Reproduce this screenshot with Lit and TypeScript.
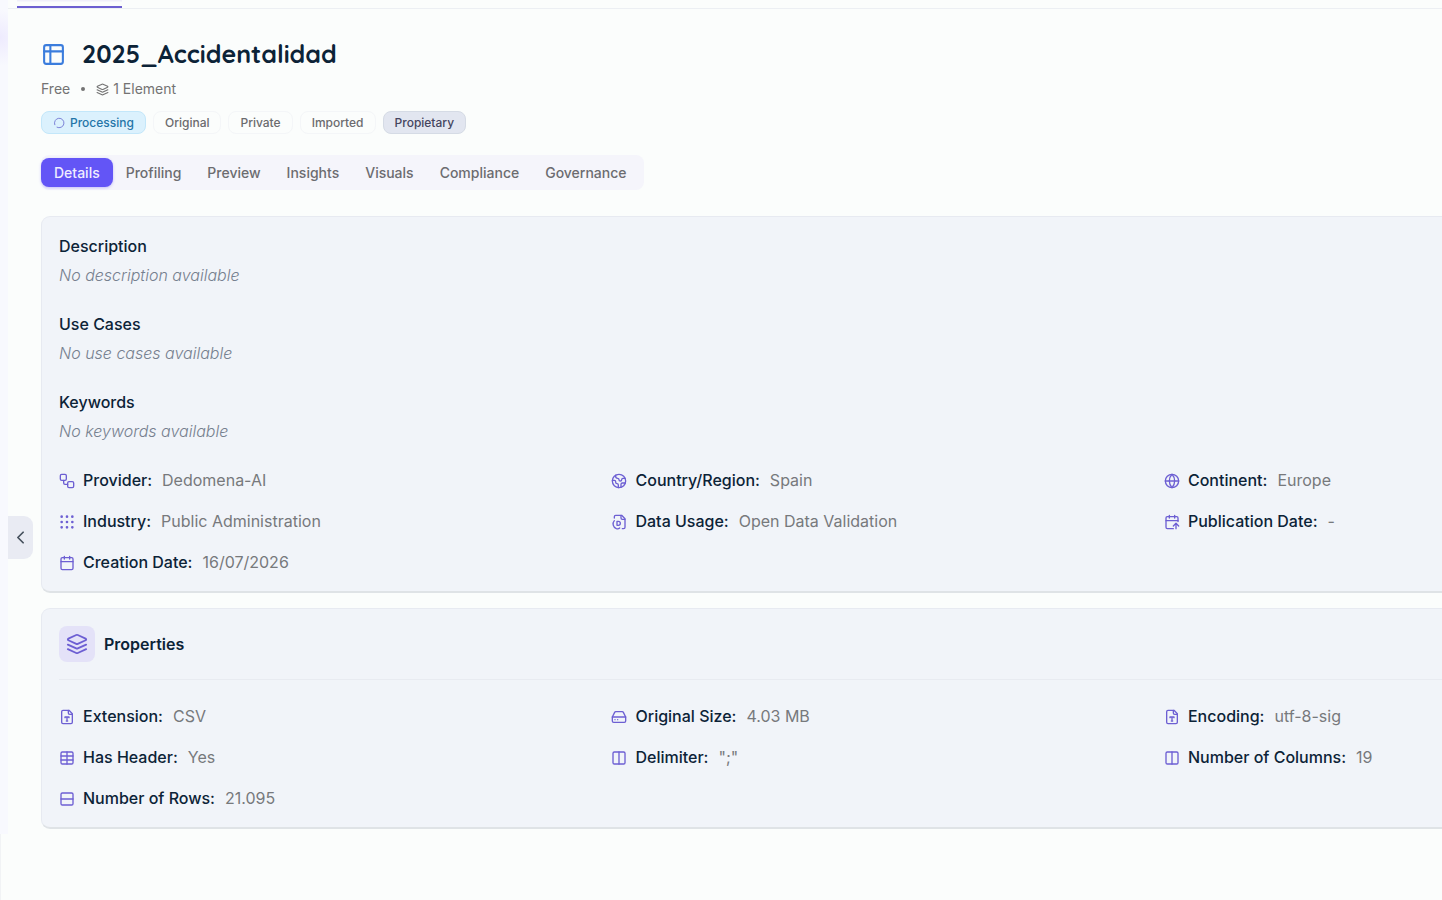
import { LitElement, html, css, svg, TemplateResult } from "lit";
import { customElement, property } from "lit/decorators.js";

const ICONS: Record<string, TemplateResult> = {
  table: svg`<rect x="3" y="3" width="18" height="18" rx="2"/><path d="M3 9h18M9 3v18"/>`,
  layers: svg`<path d="m12.83 2.18a2 2 0 0 0-1.66 0L2.6 6.08a1 1 0 0 0 0 1.83l8.58 3.91a2 2 0 0 0 1.66 0l8.58-3.9a1 1 0 0 0 0-1.83Z"/><path d="m22 17.65-9.17 4.16a2 2 0 0 1-1.66 0L2 17.65"/><path d="m22 12.65-9.17 4.16a2 2 0 0 1-1.66 0L2 12.65"/>`,
  loader: svg`<path d="M8 20.500a9.500 9.500 0 1 0-4.500-5"/>`,
  chevron: svg`<path d="m15 18-6-6 6-6"/>`,
  provider: svg`<rect x="2" y="2" width="9" height="9" rx="2"/><rect x="13" y="13" width="9" height="9" rx="2"/><path d="M7 11v4a2 2 0 0 0 2 2h4"/>`,
  earth: svg`<path d="M21.54 15H17a2 2 0 0 0-2 2v4.54"/><path d="M7 3.34V5a3 3 0 0 0 3 3a2 2 0 0 1 2 2c0 1.1.9 2 2 2a2 2 0 0 0 2-2c0-1.1.9-2 2-2h3.17"/><path d="M11 21.95V18a2 2 0 0 0-2-2a2 2 0 0 1-2-2v-1a2 2 0 0 0-2-2H2.05"/><circle cx="12" cy="12" r="10"/>`,
  globe: svg`<circle cx="12" cy="12" r="10"/><path d="M12 2a14.5 14.5 0 0 0 0 20 14.5 14.5 0 0 0 0-20"/><path d="M2 12h20"/>`,
  grip: svg`${[4, 12, 20].map((y) => [4, 12, 20].map((x) => svg`<circle cx=${x} cy=${y} r="1"/>`))}`,
  usage: svg`<path d="M5 6V4a2 2 0 0 1 2-2h9l5 5v13a2 2 0 0 1-2 2h-2"/><path d="M15 2v4a2 2 0 0 0 2 2h4"/><path d="M5 10a7.500 7.500 0 0 0 3 12c2 .5 4 0 5-1"/><path d="M9 11v6h2a3 3 0 0 0 0-6z"/>`,
  calendarUp: svg`<path d="m14 18 4-4 4 4"/><path d="M16 2v4M18 22v-8M8 2v4M3 10h18"/><path d="M21 11.35V6a2 2 0 0 0-2-2H5a2 2 0 0 0-2 2v14a2 2 0 0 0 2 2h9"/>`,
  calendar: svg`<path d="M8 2v4M16 2v4"/><rect x="3" y="4" width="18" height="18" rx="2"/><path d="M3 10h18"/>`,
  fileType: svg`<path d="M15 2H6a2 2 0 0 0-2 2v16a2 2 0 0 0 2 2h12a2 2 0 0 0 2-2V7Z"/><path d="M14 2v4a2 2 0 0 0 2 2h4"/><path d="M9 13v-1h6v1M12 12v6M11 18h2"/>`,
  drive: svg`<path d="M22 12H2"/><path d="M5.45 5.11 2 12v6a2 2 0 0 0 2 2h16a2 2 0 0 0 2-2v-6l-3.45-6.89A2 2 0 0 0 16.76 4H7.24a2 2 0 0 0-1.79 1.11z"/><path d="M6 16h.01M10 16h.01"/>`,
  grid: svg`<path d="M12 3v18"/><rect x="3" y="3" width="18" height="18" rx="2"/><path d="M3 9h18M3 15h18"/>`,
  columns: svg`<rect x="3" y="3" width="18" height="18" rx="2"/><path d="M12 3v18"/>`,
  rows: svg`<rect x="3" y="3" width="18" height="18" rx="2"/><path d="M3 12h18"/>`,
};

@customElement("ui-icon")
class UiIcon extends LitElement {
  @property() name = "";
  static styles = css`
    :host { display: inline-flex; flex: none; width: 16px; height: 16px; }
    svg { width: 100%; height: 100%; fill: none; stroke: currentColor; stroke-width: 2; stroke-linecap: round; stroke-linejoin: round; }
  `;
  render() {
    return html`<svg viewBox="0 0 24 24" aria-hidden="true">${ICONS[this.name]}</svg>`;
  }
}

type Fact = [icon: string, label: string, value: string];

const DETAILS: Fact[] = [
  ["provider", "Provider:", "Dedomena-AI"],
  ["earth", "Country/Region:", "Spain"],
  ["globe", "Continent:", "Europe"],
  ["grip", "Industry:", "Public Administration"],
  ["usage", "Data Usage:", "Open Data Validation"],
  ["calendarUp", "Publication Date:", "-"],
  ["calendar", "Creation Date:", "16/07/2026"],
];
const PROPERTIES: Fact[] = [
  ["fileType", "Extension:", "CSV"],
  ["drive", "Original Size:", "4.03 MB"],
  ["fileType", "Encoding:", "utf-8-sig"],
  ["grid", "Has Header:", "Yes"],
  ["columns", "Delimiter:", "\";\""],
  ["columns", "Number of Columns:", "19"],
  ["rows", "Number of Rows:", "21.095"],
];
const SECTIONS = [
  ["Description", "No description available"],
  ["Use Cases", "No use cases available"],
  ["Keywords", "No keywords available"],
];
const TABS = ["Details", "Profiling", "Preview", "Insights", "Visuals", "Compliance", "Governance"];

@customElement("app-root")
class AppRoot extends LitElement {
  static styles = css`
    * { box-sizing: border-box; }
    :host { display: block; font-family: Inter, "Noto Sans", sans-serif; color: #0c2337; background: #fbfdfc; }
    h1, h2, h3, p, dl, dd { margin: 0; }
    button { font: inherit; border: 0; }
    .shell { position: relative; display: flex; min-height: 100vh; overflow: hidden; }
    .side { display: flex; flex: none; width: 8px; flex-direction: column; }
    .rail { flex: 1; background: radial-gradient(circle at 0 38px, #eeebfe, #f8f9fe 28px); }
    .foot { height: 66px; border-left: 1px solid #f1f3f5; }
    .page { flex: 1; min-width: 0; }
    .strip { display: flex; height: 9px; padding-left: 9px; border-bottom: 1px solid #eceff3; }
    .current { width: 105px; height: 8px; border-bottom: 2px solid #6c5fd0; background: linear-gradient(#f0effa 1px, transparent 2px); }
    .content { display: flex; flex-direction: column; width: 119%; padding: 28px 0 0 33px; }
    .title { display: flex; align-items: center; gap: 16px; height: 34px; }
    .title ui-icon { width: 25px; height: 25px; color: #3b7ddd; }
    h1 { font: 700 25px/34px Quicksand, Lexend, Lato, sans-serif; color: #0c2337; }
    .meta { display: flex; align-items: center; gap: 11px; margin-top: 8px; font-size: 14px; line-height: 20px; color: #737373; }
    .dot { width: 4px; height: 4px; border-radius: 50%; background: #737373; }
    .count { display: flex; align-items: center; gap: 4px; }
    .count ui-icon { width: 13px; height: 13px; }
    .badges { display: flex; gap: 7px; margin-top: 12px; }
    .badge { display: flex; align-items: center; gap: 5px; height: 23px; padding: 0 11px; border: 1px solid #f4f6f8; border-radius: 8px; font-size: 12px; font-weight: 500; color: #6b6b6e; }
    .badge ui-icon { width: 12px; height: 12px; color: #7d83d8; }
    .processing { background: #dbf1fd; border-color: #c3e7fa; color: #2475a8; }
    .owned { background: #e2e6f0; border-color: #d5dbe5; color: #45455f; }
    .tabs { display: flex; align-self: flex-start; margin-top: 21px; padding: 3px 4px 3px 0; border-radius: 8px; background: #f5f5fb; }
    .tab { height: 29px; padding: 0 13px; border-radius: 8px; background: none; font-size: 14px; font-weight: 500; color: #6c6c70; }
    .active { background: #6355f6; color: #efedff; box-shadow: 0 1px 3px #6355f655; }
    .card { padding: 17px 17px 16px; border: 1px solid #e7eaf1; border-bottom: 2px solid #dfe3e6; border-radius: 9px; background: #f1f4f9; }
    .card + .card { margin-top: 15px; }
    .first { margin-top: 26px; }
    h3 { font-size: 16px; font-weight: 500; line-height: 24px; }
    .empty { margin: 5px 0 24px; font-size: 16px; line-height: 25px; font-style: italic; font-weight: 300; color: #76808f; }
    .facts { display: grid; grid-template-columns: repeat(3, 1fr); gap: 16px 20px; }
    .fact { display: flex; align-items: center; gap: 8px; font-size: 16px; line-height: 25px; }
    .fact ui-icon { color: #6d5fd3; }
    dt { font-weight: 500; }
    dd { margin-left: 2px; color: #77797c; }
    .heading { display: flex; align-items: center; gap: 9px; padding-bottom: 17px; margin-bottom: 24px; border-bottom: 1px solid #e8ebf1; }
    .tile { display: flex; padding: 7px; border-radius: 8px; background: #e4e2f8; color: #6d5fd3; }
    .tile ui-icon { width: 22px; height: 22px; }
    h2 { font-size: 16px; font-weight: 600; line-height: 25px; }
    .collapse { position: absolute; left: 8px; top: 516px; display: flex; align-items: center; justify-content: center; width: 25px; height: 43px; padding: 0; border-radius: 0 9px 9px 0; background: #e9ebf3; color: #45505c; }
    .collapse ui-icon { width: 21px; height: 21px; }
  `;

  facts(items: Fact[]) {
    return html`<dl class="facts">
      ${items.map(([icon, label, value]) => html`<div class="fact"><ui-icon name=${icon}></ui-icon><dt>${label}</dt><dd>${value}</dd></div>`)}
    </dl>`;
  }

  render() {
    return html`<div class="shell">
      <div class="side"><div class="rail"></div><div class="foot"></div></div>
      <main class="page">
        <div class="strip"><div class="current"></div></div>
        <div class="content">
          <div class="title"><ui-icon name="table"></ui-icon><h1>2025_Accidentalidad</h1></div>
          <div class="meta"><span>Free</span><span class="dot"></span><span class="count"><ui-icon name="layers"></ui-icon>1 Element</span></div>
          <div class="badges">
            <span class="badge processing"><ui-icon name="loader"></ui-icon>Processing</span>
            <span class="badge">Original</span><span class="badge">Private</span><span class="badge">Imported</span>
            <span class="badge owned">Propietary</span>
          </div>
          <div class="tabs" role="tablist">
            ${TABS.map((t, i) => html`<button class="tab ${i ? "" : "active"}" role="tab" aria-selected=${i === 0}>${t}</button>`)}
          </div>
          <section class="card first">
            ${SECTIONS.map(([name, text]) => html`<h3>${name}</h3><p class="empty">${text}</p>`)}
            ${this.facts(DETAILS)}
          </section>
          <section class="card">
            <div class="heading"><span class="tile"><ui-icon name="layers"></ui-icon></span><h2>Properties</h2></div>
            ${this.facts(PROPERTIES)}
          </section>
        </div>
      </main>
      <button class="collapse" aria-label="Collapse panel"><ui-icon name="chevron"></ui-icon></button>
    </div>`;
  }
}
